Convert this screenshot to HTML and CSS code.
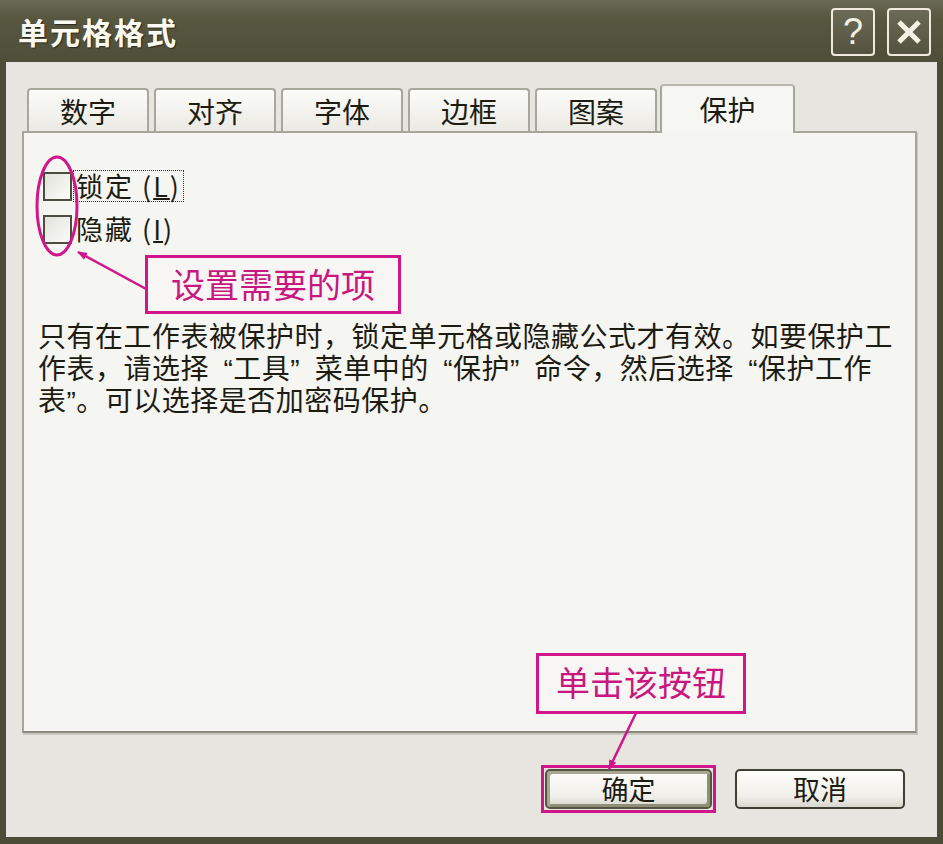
FILE: index.html
```html
<!DOCTYPE html>
<html lang="zh-CN">
<head>
    <meta charset="UTF-8">
    <title>单元格格式</title>
    <link rel="stylesheet" href="styles.css">
</head>
<body>
    <div class="window">
        <div class="titlebar">
            <div class="title">单元格格式</div>
            <div class="caption-buttons">
                <div class="cap-btn">?</div>
                <div class="cap-btn">
                    <svg width="30" height="30" viewBox="0 0 30 30">
                        <path d="M5 5 L25 25 M25 5 L5 25" stroke="#f4f1e4" stroke-width="5" fill="none"/>
                    </svg>
                </div>
            </div>
        </div>

        <div class="client">
            <div class="tabs">
                <div class="tab">数字</div>
                <div class="tab">对齐</div>
                <div class="tab">字体</div>
                <div class="tab">边框</div>
                <div class="tab">图案</div>
                <div class="tab active">保护</div>
            </div>

            <div class="panel">
                <div class="check-row">
                    <span class="checkbox"></span>
                    <span class="check-label focused">锁定 (<u>L</u>)</span>
                </div>
                <div class="check-row">
                    <span class="checkbox"></span>
                    <span class="check-label">隐藏 (<u>I</u>)</span>
                </div>
                <p class="note">
                    <span class="line">只有在工作表被保护时，锁定单元格或隐藏公式才有效。如要保护工</span>
                    <span class="line">作表，请选择&ensp;“工具”&ensp;菜单中的&ensp;“保护”&ensp;命令，然后选择&ensp;“保护工作</span>
                    <span class="line">表”。可以选择是否加密码保护。</span>
                </p>
            </div>

            <div class="buttons">
                <div class="btn-mark">
                    <button class="btn default">确定</button>
                </div>
                <button class="btn">取消</button>
            </div>
        </div>

        <!-- annotations drawn over the dialog -->
        <svg class="overlay" width="943" height="844" viewBox="0 0 943 844">
            <defs>
                <marker id="head" markerWidth="10" markerHeight="8" refX="9" refY="4" orient="auto" markerUnits="userSpaceOnUse">
                    <path d="M0 0 L10 4 L0 8 Z" fill="#d0168a"/>
                </marker>
            </defs>
            <ellipse cx="57" cy="206" rx="20" ry="49" fill="none" stroke="#d0168a" stroke-width="3"/>
            <path d="M148 290 L78 252" stroke="#d0168a" stroke-width="2.5" marker-end="url(#head)"/>
            <path d="M636 713 L609 769" stroke="#d0168a" stroke-width="2.5" marker-end="url(#head)"/>
        </svg>
        <div class="callout callout-check">设置需要的项</div>
        <div class="callout callout-ok">单击该按钮</div>
    </div>
</body>
</html>
```

FILE: styles.css
```css
body {
    margin: 0;
    padding: 0;
    background-color: #4c4b37;
    font-family: "Noto Sans CJK SC", "Liberation Sans", sans-serif;
}

.window {
    position: relative;
    width: 943px;
    height: 844px;
    display: flex;
    flex-direction: column;
    background-color: #4c4b37;
}

.titlebar {
    height: 62px;
    display: flex;
    align-items: center;
    justify-content: space-between;
    padding: 0 12px 0 18px;
    background: linear-gradient(#6a6955, #57563f 30%, #4f4e39);
}

.title {
    color: #fbfaf2;
    font-size: 30px;
    font-weight: bold;
    letter-spacing: 2px;
    text-shadow: 1px 1px 1px #2a2a1c;
}

.caption-buttons {
    display: flex;
    gap: 12px;
    margin-top: 2px;
}

.cap-btn {
    width: 40px;
    height: 44px;
    border: 2px solid #efeadb;
    border-radius: 4px;
    background: linear-gradient(#6b6a57, #545340);
    color: #f4f1e4;
    font-size: 36px;
    font-family: "Liberation Sans", sans-serif;
    display: flex;
    align-items: center;
    justify-content: center;
}

.client {
    flex: 1;
    margin: 0 6px 7px 6px;
    background-color: #e6e5df;
    padding: 22px 20px 0 16px;
    display: flex;
    flex-direction: column;
}

.tabs {
    display: flex;
    align-items: flex-end;
    padding-left: 5px;
    gap: 5px;
    height: 49px;
    position: relative;
    z-index: 1;
}

.tab {
    width: 122px;
    height: 43px;
    box-sizing: border-box;
    border: 2px solid #a8a79e;
    border-bottom: none;
    border-radius: 4px 4px 0 0;
    background: linear-gradient(#fbfbf9, #ebeae4);
    color: #1c1c12;
    font-size: 28px;
    line-height: 42px;
    text-align: center;
    margin-bottom: 2px;
}

.active {
    width: 135px;
    height: 49px;
    margin-left: -2px;
    margin-bottom: 0;
    background: #f6f6f3;
    border-top-color: #b9b8ae;
    line-height: 46px;
}

.panel {
    position: relative;
    margin-top: -2px;
    height: 602px;
    box-sizing: border-box;
    border: 2px solid #a6a59b;
    border-bottom-color: #8a897f;
    background-color: #f5f5f2;
    padding: 38px 0 0 14px;
    box-shadow: 1px 2px 0 #c9c8c0;
}

.check-row {
    display: flex;
    align-items: center;
    height: 30px;
    margin-bottom: 13px;
}

.checkbox {
    width: 29px;
    height: 29px;
    box-sizing: border-box;
    border: 2px solid #4b4b3f;
    background: linear-gradient(135deg, #e2e2dc, #fbfbf9);
    margin-left: 5px;
}

.check-label {
    margin-left: 1px;
    padding: 0 2px;
    font-size: 27px;
    line-height: 30px;
    letter-spacing: 2px;
    color: #1c1c12;
    border: 1px dotted transparent;
}

.check-label u {
    text-decoration-thickness: 2px;
}

.focused {
    border-color: #33332a;
}

/* latin quotes come from Liberation Sans, the rest falls back to the CJK face */
.note {
    margin: 78px 0 0 0;
    font-family: "Liberation Sans", "Noto Sans CJK SC", sans-serif;
    font-size: 28px;
    line-height: 32px;
    letter-spacing: 0.5px;
    color: #1c1c12;
}

.line {
    display: block;
    white-space: nowrap;
}

.buttons {
    display: flex;
    justify-content: flex-end;
    align-items: center;
    gap: 19px;
    margin-top: 32px;
    padding-right: 12px;
}

.btn-mark {
    border: 3px solid #d0168a;
    padding: 1px;
}

.btn {
    width: 170px;
    height: 40px;
    border: 2px solid #3f3f33;
    border-radius: 5px;
    background: linear-gradient(#fdfdfb, #f0efea 70%, #d8d7ce);
    font-family: "Noto Sans CJK SC", sans-serif;
    font-size: 27px;
    line-height: 34px;
    color: #1c1c12;
    padding: 0;
}

.default {
    width: 167px;
    border-color: #55543f;
    box-shadow: inset 3px 3px 0 #a8a793, inset -3px -3px 0 #8f8e78;
}

.overlay {
    position: absolute;
    left: 0;
    top: 0;
    pointer-events: none;
}

.callout {
    position: absolute;
    box-sizing: border-box;
    border: 3px solid #d0168a;
    background-color: #f7f6f4;
    color: #c8187f;
    font-size: 34px;
    text-align: center;
    line-height: 52px;
}

.callout-check {
    left: 145px;
    top: 255px;
    width: 256px;
    height: 59px;
}

.callout-ok {
    left: 536px;
    top: 653px;
    width: 210px;
    height: 61px;
}
```
